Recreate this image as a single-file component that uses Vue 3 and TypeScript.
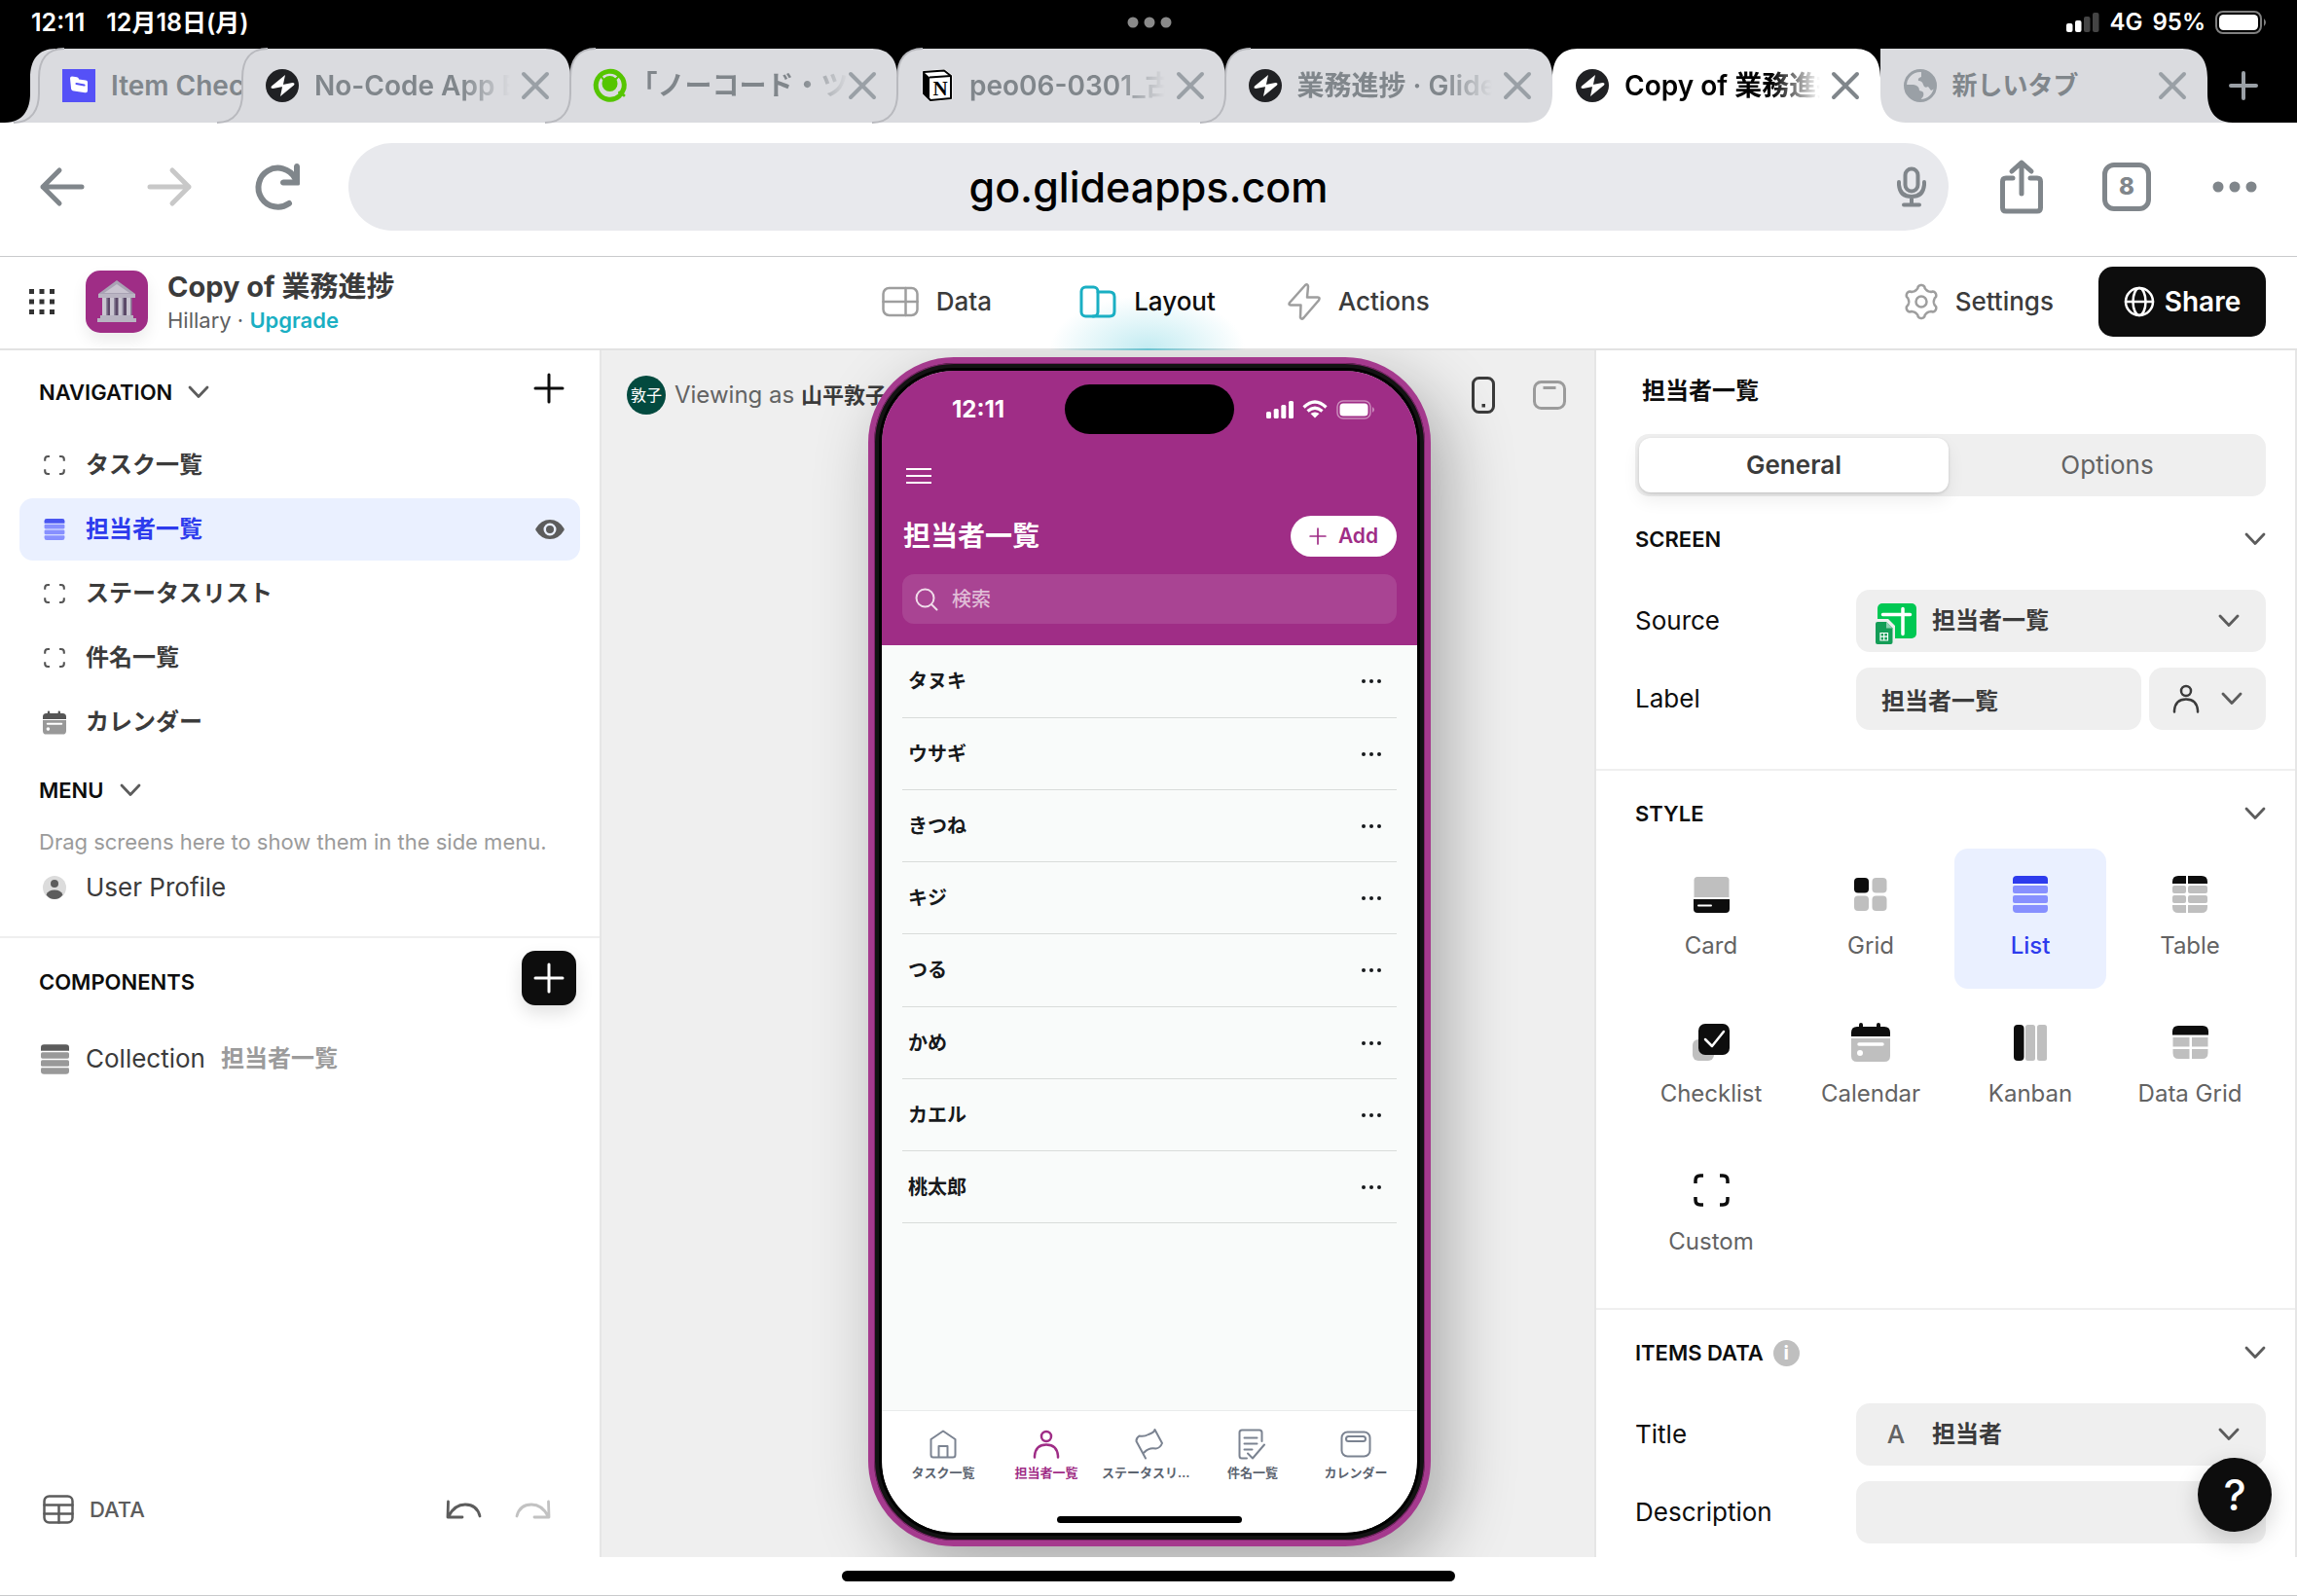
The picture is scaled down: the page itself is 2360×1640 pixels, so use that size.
<script setup lang="ts">
import { h, ref, type FunctionalComponent } from 'vue'

interface Glyph { w: number; h: number; body: string }

/* Outline of the settings cog: a circle whose radius swells six times. */
function cogPath(cx: number, cy: number): string {
  const points: string[] = []
  for (let i = 0; i < 120; i++) {
    const a = (i / 120) * Math.PI * 2
    const swell = Math.cos(6 * a)
    const r = 14.2 + (swell > 0 ? 2.8 * Math.sqrt(swell) : 1.4 * swell)
    points.push(`${(cx + r * Math.sin(a)).toFixed(2)} ${(cy - r * Math.cos(a)).toFixed(2)}`)
  }
  return `M${points.join('L')}Z`
}

const line = 'fill="none" stroke="currentColor" stroke-linecap="round" stroke-linejoin="round"'

const glyphs: Record<string, Glyph> = {
  glide: { w: 34, h: 34, body: '<circle cx="17" cy="17" r="17" fill="#202124"/><path fill="#fff" d="M20 6 6 17.500q-1.500 2.500 1.500 2.500l10-2zM15 28l14-11.500q1.500-2.500-1.500-2.500l-10 2z"/>' },
  itemcheck: { w: 34, h: 34, body: '<path fill="#5551f7" d="M0 0h34v34H0z"/><path fill="#fff" d="M8 9.500q0-2 2-2l5 .8q2 .2 2 2.200l7 1q2 .2 2 2V22q0 2.500-2.500 2.200L12 22.500q-3-.4-3-3z"/><path stroke="#5551f7" stroke-width="2.200" stroke-linecap="round" d="m14.500 15 8 1.500"/>' },
  qiita: { w: 34, h: 34, body: '<path fill="none" stroke="#55c500" stroke-width="5" stroke-linecap="round" d="M26.500 27.500A14.500 14.500 0 1 1 31 19.500l-1.500 3.500"/><circle cx="16.500" cy="15" r="8" fill="#55c500"/><path stroke="#55c500" stroke-width="2" d="m10 11-3-5M22 11l4-4"/><path d="m26.500 24 4.500 3" stroke="#55c500" stroke-width="3" stroke-linecap="round"/>' },
  notion: { w: 34, h: 34, body: '<path fill="#fff" stroke="#fff" stroke-width="3" stroke-linejoin="round" d="m3 3 21-1.500L31 7v23l-21 2-7-7z"/><path fill="#fff" stroke="#000" stroke-width="2" stroke-linejoin="round" d="m3 3 21-1.500L31 7v23l-21 2-7-7z"/><path fill="#000" d="m3 3 6 5.500V31l-6-6z"/><path stroke="#000" stroke-width="2" d="M9 8.500 31 7"/><text x="20" y="27" text-anchor="middle" font-family="Liberation Serif, serif" font-weight="700" font-size="21" fill="#000">N</text>' },
  world: { w: 34, h: 34, body: '<circle cx="17" cy="17" r="15.500" fill="#dadbdf" stroke="#9aa0a6" stroke-width="3"/><path fill="#9aa0a6" d="M2 16h8q6 1 6 6l3 1q2 1 1 5l-4 5C7 32 2 26 2 16zM18 2v6q-4 1-3 4 4 0 5 4 1 4 5 2l3 4 4-2q2-14-14-18z"/>' },
  close: { w: 30, h: 30, body: `<path ${line} stroke-width="4" d="m3 3 24 24M27 3 3 27"/>` },
  plusTab: { w: 32, h: 32, body: `<path ${line} stroke-width="4" d="M16 3v26M3 16h26"/>` },
  back: { w: 48, h: 42, body: `<path ${line} stroke-width="5" d="M44 21H4M21 4 4 21l17 17"/>` },
  forward: { w: 48, h: 42, body: `<path ${line} stroke-width="5" d="M4 21h40M27 4l17 17-17 17"/>` },
  reload: { w: 50, h: 50, body: `<path ${line} stroke-width="6" d="M37 42A20 20 0 1 1 43 16"/><path fill="currentColor" d="M48 4v18q0 1.500-1.500 1.500H31q-3-.5-3-3t3-3h11V4q.5-3 3-3t3 3z"/>` },
  mic: { w: 32, h: 42, body: `<rect x="9.500" y="2.500" width="13" height="23" rx="6.500" ${line} stroke-width="4"/><path ${line} stroke-width="4" d="M3 16v3q1 12 13 12t13-12v-3M16 32v7M8 39.500h16"/>` },
  share: { w: 46, h: 56, body: `<path ${line} stroke-width="5" d="M14 19H7q-3.500 0-3.500 3.500v27Q3.500 53 7 53h32q3.500 0 3.500-3.500v-27Q42.500 19 39 19h-7M23 35V4M13 12l10-9 10 9"/>` },
  dots: { w: 46, h: 12, body: '<g fill="currentColor"><circle cx="6" cy="6" r="5.500"/><circle cx="23" cy="6" r="5.500"/><circle cx="40" cy="6" r="5.500"/></g>' },
  apps: { w: 26, h: 26, body: '<path fill="currentColor" d="M0 0h5v5H0zM10.500 0h5v5h-5zM21 0h5v5h-5zM0 10.500h5v5H0zM10.500 10.500h5v5h-5zM21 10.500h5v5h-5zM0 21h5v5H0zM10.500 21h5v5h-5zM21 21h5v5h-5z"/>' },
  museum: { w: 40, h: 44, body: '<path fill="#a9a3b4" d="M20 0 39 14H1z"/><path fill="#c9c4d0" d="M20 4 33 13H7z"/><path fill="#b9b4c2" d="M1 14h38v4H1zM3 36h34v3H3zM0 39h40v4H0z"/><path fill="#5b4968" d="M5 18h30v18H5z"/><path fill="#c9c5d0" d="M5 18h5v18H5zM13 18h5v18h-5zM21.500 18h5v18h-5zM30 18h5v18h-5z"/><path fill="#8e869b" d="M9 18h1.500v18H9zM17 18h1.500v18H17zM25.500 18H27v18h-1.500zM34 18h1.500v18H34z"/>' },
  data: { w: 38, h: 32, body: `<rect x="1.500" y="2" width="35" height="28" rx="6" ${line} stroke-width="2.500"/><path ${line} stroke-width="2.500" d="M1.500 16h35M24.500 2v28"/>` },
  layout: { w: 38, h: 34, body: `<rect x="2" y="2" width="17" height="30" rx="4.500" ${line} stroke-width="3"/><path ${line} stroke-width="3" d="M19 7h12q5 0 5 5v15q0 5-5 5H14"/>` },
  bolt: { w: 34, h: 40, body: `<path ${line} stroke-width="2.500" d="M18.500 2.500 2 21q-1.500 2.500 1 2.500h10.500L13 36q1 3 3.500.5L32 18.500q1.500-3-1-3H20l1-11q-.5-3-2.500-2z"/>` },
  cog: { w: 38, h: 38, body: `<path ${line} stroke-width="2.500" d="${cogPath(19, 19)}"/><circle cx="19" cy="19" r="5.500" ${line} stroke-width="2.500"/>` },
  globe: { w: 32, h: 32, body: `<circle cx="16" cy="16" r="14" ${line} stroke-width="2.500"/><ellipse cx="16" cy="16" rx="6.500" ry="14" ${line} stroke-width="2.500"/><path ${line} stroke-width="2.500" d="M2 16h28"/>` },
  chevron: { w: 22, h: 14, body: `<path ${line} stroke-width="2.800" d="m2 2 9 9.500L20 2"/>` },
  plus: { w: 32, h: 32, body: `<path ${line} stroke-width="3" d="M16 2v28M2 16h28"/>` },
  custom: { w: 37, h: 34, body: `<path fill="none" stroke="currentColor" stroke-width="3.500" d="M2 10V7q0-5 5-5h3M27 2h3q5 0 5 5v3M35 24v3q0 5-5 5h-3M10 32H7q-5 0-5-5v-3"/>` },
  list: { w: 36, h: 38, body: '<path fill="currentColor" d="M4 0h28q4 0 4 4v4H0V4q0-4 4-4z"/><g fill="var(--soft)"><rect y="10" width="36" height="8" rx="2"/><rect y="20" width="36" height="8" rx="2"/><path d="M1 30h34q1 0 1 2v2q0 4-4 4H4q-4 0-4-4v-2q0-2 1-2z"/></g>' },
  calendar: { w: 40, h: 40, body: '<path fill="currentColor" d="M6 4h2V2q0-2 2-2t2 2v2h14V2q0-2 2-2t2 2v2h4q6 0 6 6v4H0v-4q0-6 6-6z"/><path fill="var(--soft)" d="M0 16h40v18q0 6-6 6H6q-6 0-6-6z"/><path stroke="#fff" stroke-width="3.500" stroke-linecap="round" d="M8 22h24"/><circle cx="9" cy="31" r="3" fill="#fff"/>' },
  card: { w: 37, h: 37, body: '<path fill="var(--soft)" d="M4 0h29q3.500 0 3.500 3.500V21H.5V3.500Q.5 0 4 0z"/><path fill="currentColor" d="M0 23h37v10q0 4-4 4H4q-4 0-4-4z"/><path stroke="#fff" stroke-width="2" stroke-linecap="round" d="M5 29.500h13"/>' },
  grid: { w: 34, h: 34, body: '<rect width="15" height="15.500" rx="4" fill="currentColor"/><g fill="var(--soft)"><rect x="18.500" width="15" height="15.500" rx="4"/><rect y="18.500" width="15" height="15.500" rx="4"/><rect x="18.500" y="18.500" width="15" height="15.500" rx="4"/></g>' },
  table: { w: 36, h: 38, body: '<path fill="currentColor" d="M6 0h8v8H0V6q0-6 6-6zM16 0h14q6 0 6 6v2H16z"/><g fill="var(--soft)"><rect y="10" width="14" height="8" rx="2"/><rect x="16" y="10" width="20" height="8" rx="2"/><rect y="20" width="14" height="8" rx="2"/><rect x="16" y="20" width="20" height="8" rx="2"/><path d="M0 30h14v8H6q-6 0-6-6zM16 30h20v2q0 6-6 6H16z"/></g>' },
  checklist: { w: 38, h: 38, body: '<rect y="16" width="22" height="22" rx="6" fill="var(--soft)"/><rect x="6" width="32" height="32" rx="7" fill="currentColor"/><path fill="none" stroke="#fff" stroke-width="2.500" stroke-linecap="round" stroke-linejoin="round" d="m13 16 7 7L32 8"/>' },
  kanban: { w: 34, h: 37, body: '<rect width="10.500" height="37" rx="4" fill="currentColor"/><g fill="var(--soft)"><rect x="12" width="10" height="37" rx="2.500"/><rect x="24" width="10" height="37" rx="2.500"/></g>' },
  datagrid: { w: 37, h: 34, body: '<path fill="currentColor" d="M6 0h25q6 0 6 6v3.500H0V6q0-6 6-6z"/><path fill="var(--soft)" d="M.5 12h17v9.500H.5zM20 12h16.500v9.500H20zM.5 24h17v10H6.500q-6 0-6-6zM20 24h16.500v4q0 6-6 6H20z"/>' },
  eye: { w: 30, h: 20, body: '<path fill="currentColor" fill-rule="evenodd" d="M15 0q9 0 14.500 9 .5 1 0 2Q24 20 15 20T.5 11q-.5-1 0-2Q6 0 15 0zm0 3.500a6.500 6.500 0 1 0 0 13 6.500 6.500 0 0 0 0-13z"/><circle cx="15" cy="10" r="4" fill="currentColor"/>' },
  profile: { w: 24, h: 24, body: '<circle cx="12" cy="12" r="12" fill="#dcdcdc"/><circle cx="12" cy="8" r="4" fill="#5c5c5c"/><path fill="#5c5c5c" d="M3.500 19.500q2-5 8.500-5t8.500 5Q17 24 12 24t-8.500-4.500z"/>' },
  sheet: { w: 32, h: 30, body: `<rect x="1.500" y="1.500" width="29" height="27" rx="5" ${line} stroke-width="2.500"/><path ${line} stroke-width="2.500" d="M1.500 10.500h29M1.500 19.500h29M16.500 10.500v18"/>` },
  undo: { w: 37, h: 20, body: `<path ${line} stroke-width="2.800" d="M2.500 2 2 18h15M3 17Q9 5 20 5q12 0 15 12"/>` },
  redo: { w: 37, h: 20, body: `<path ${line} stroke-width="2.800" d="M34.500 2l.5 16H20M34 17Q28 5 17 5 5 5 2 17"/>` },
  phone: { w: 24, h: 38, body: `<rect x="1.500" y="1.500" width="21" height="35" rx="6" ${line} stroke-width="3"/><path fill="currentColor" d="M10.500 28h3.500v3.500h-3.500z"/>` },
  tablet: { w: 34, h: 30, body: `<rect x="1.500" y="1.500" width="31" height="27" rx="7" ${line} stroke-width="3"/><path stroke="currentColor" stroke-width="3" d="M10.500 7.500h13"/>` },
  bars: { w: 28, h: 18, body: '<g fill="currentColor"><rect y="11" width="5" height="7" rx="1.500"/><rect x="7.700" y="8" width="5" height="10" rx="1.500"/><rect x="15.300" y="4" width="5" height="14" rx="1.500"/><rect x="23" width="5" height="18" rx="1.500"/></g>' },
  wifi: { w: 26, h: 19, body: '<g fill="none" stroke="currentColor" stroke-width="3.200"><path d="M1.500 7.500q11.500-11 23 0M5.500 11.500q7.500-6.500 15 0"/></g><path fill="currentColor" d="M8.500 14q4.500-3 9 0L13 18.500z"/>' },
  battery: { w: 40, h: 20, body: '<rect x="1" y="1" width="34" height="18" rx="6" fill="none" stroke="currentColor" stroke-opacity=".45" stroke-width="1.500"/><rect x="3.500" y="3.500" width="29" height="13" rx="3.500" fill="currentColor"/><path fill="currentColor" fill-opacity=".45" d="M37 7q4 3 0 6z"/>' },
  batteryPad: { w: 54, h: 24, body: '<rect x="1" y="1" width="46" height="22" rx="7" fill="none" stroke="#808080" stroke-width="2"/><rect x="4" y="4" width="40" height="16" rx="4.500" fill="#fff"/><path fill="#808080" d="M50 8q4 4 0 8z"/>' },
  signalPad: { w: 34, h: 20, body: '<rect y="11" width="6.500" height="9" rx="2" fill="#fff"/><rect x="9" y="8" width="6.500" height="12" rx="2" fill="#fff"/><rect x="18" y="4" width="6.500" height="16" rx="2" fill="#444"/><rect x="27" width="6.500" height="20" rx="2" fill="#444"/>' },
  menu: { w: 26, h: 18, body: '<path stroke="currentColor" stroke-width="2" d="M0 2h26M0 9h26M0 16h26"/>' },
  search: { w: 24, h: 24, body: `<circle cx="10.500" cy="10.500" r="9" ${line} stroke-width="2"/><path ${line} stroke-width="2" d="m17 17 5.500 5.500"/>` },
  more: { w: 22, h: 6, body: '<g fill="currentColor"><circle cx="3" cy="3" r="2"/><circle cx="11" cy="3" r="2"/><circle cx="19" cy="3" r="2"/></g>' },
  home: { w: 28, h: 30, body: `<path ${line} stroke-width="2" d="M14 1.500 26.500 10v16q0 2.500-2.500 2.500H4Q1.500 28.500 1.500 26V10zM9.500 28V17h9v11"/>` },
  person: { w: 28, h: 30, body: `<circle cx="14" cy="7" r="5" ${line} stroke-width="2.500"/><path ${line} stroke-width="2.500" d="M2 28.500V27q1-11.500 12-11.500T26 27v1.500"/>` },
  flag: { w: 30, h: 32, body: `<path ${line} stroke-width="2" d="M11 30.500 1.500 13q-.5-3 3-5.500 5 1 9.500-1.500 6-2 6.500-5l7.500 14q-2 5-6.500 5.500-7-1.500-12 4"/>` },
  checkdoc: { w: 30, h: 32, body: `<path ${line} stroke-width="2" d="M9 30.500H4Q1.500 30.500 1.500 28V4Q1.500 1.500 4 1.500h18q2.500 0 2.500 2.500v9M6.500 9.500h13M6.500 15.500h13M6.500 21.500h8M10 25.500l5 5 12-14"/>` },
  schedule: { w: 32, h: 28, body: `<rect x="1.500" y="1.500" width="29" height="25" rx="6" ${line} stroke-width="2"/><rect x="6" y="6" width="20" height="5" rx="2.500" ${line} stroke-width="2"/>` },
  source: { w: 42, h: 42, body: '<rect x="2" width="40" height="36" rx="5" fill="#00c853"/><path stroke="#fff" stroke-width="3.500" stroke-linecap="round" d="M7.500 11.500h28M28 5.500v26"/><path fill="#efefef" d="M0 16h13l7 7v19H0z"/><path fill="#149d57" d="M2 19h9l6.500 6.500V40q0 2-2 2H2q-2 0-2-2V21q0-2 2-2z"/><path fill="#8ed1b1" d="M11 19v6.500h6.500z"/><path fill="none" stroke="#fff" stroke-width="1.200" d="M5 30.500h7.500v7.500H5zM5 34.200h7.500M8.700 30.500v7.500"/>' },
}

const Ic: FunctionalComponent<{ n: string }> = (props) => {
  const g = glyphs[props.n]
  return h('svg', {
    width: g.w,
    height: g.h,
    viewBox: `0 0 ${g.w} ${g.h}`,
    'aria-hidden': 'true',
    innerHTML: g.body,
  })
}
Ic.props = ['n']

const tabs = [
  { icon: 'glide', title: 'No-Code App B', kind: 'idle' },
  { icon: 'qiita', title: '「ノーコード・ツー', kind: 'idle flush' },
  { icon: 'notion', title: 'peo06-0301_古', kind: 'idle' },
  { icon: 'glide', title: '業務進捗 · Glide', kind: 'idle' },
  { icon: 'glide', title: 'Copy of 業務進捗', kind: 'active' },
  { icon: 'world', title: '新しいタブ', kind: 'idle last' },
]

const screens = [
  { icon: 'custom', label: 'タスク一覧' },
  { icon: 'list', label: '担当者一覧' },
  { icon: 'custom', label: 'ステータスリスト' },
  { icon: 'custom', label: '件名一覧' },
  { icon: 'calendar', label: 'カレンダー' },
]
const current = ref('担当者一覧')

const people = ['タヌキ', 'ウサギ', 'きつね', 'キジ', 'つる', 'かめ', 'カエル', '桃太郎']

const phoneTabs = [
  { icon: 'home', label: 'タスク一覧' },
  { icon: 'person', label: '担当者一覧' },
  { icon: 'flag', label: 'ステータスリスト' },
  { icon: 'checkdoc', label: '件名一覧' },
  { icon: 'schedule', label: 'カレンダー' },
]

const styles = [
  { icon: 'card', label: 'Card' },
  { icon: 'grid', label: 'Grid' },
  { icon: 'list', label: 'List' },
  { icon: 'table', label: 'Table' },
  { icon: 'checklist', label: 'Checklist' },
  { icon: 'calendar', label: 'Calendar' },
  { icon: 'kanban', label: 'Kanban' },
  { icon: 'datagrid', label: 'Data Grid' },
  { icon: 'custom', label: 'Custom' },
]
const style = ref('List')
const pane = ref('General')
const label = ref('担当者一覧')
</script>

<template>
  <div class="page">
    <div class="status">
      <div class="status-side"><span>12:11</span><span>12月18日(月)</span></div>
      <Ic n="dots" class="multitask" />
      <div class="status-side end"><Ic n="signalPad" /><span>4G</span><span>95%</span><Ic n="batteryPad" /></div>
    </div>

    <div class="strip">
      <div class="tab stub idle">
        <svg class="edge" width="52" height="76" viewBox="0 0 52 76" aria-hidden="true"><path class="fill" d="M0 76C19 76 26 62 26 46V30C26 12 34 0 52 0V76Z" /></svg>
      </div>
      <div class="tab short idle">
        <svg class="edge" width="52" height="76" viewBox="0 0 52 76" aria-hidden="true"><path class="fill" d="M0 76C19 76 26 62 26 46V30C26 12 34 0 52 0V76Z" /><path class="rim" d="M0 76C19 76 26 62 26 46V30C26 12 34 0 52 0" /></svg>
        <Ic n="itemcheck" /><span class="tab-title">Item Check</span>
      </div>
      <div v-for="t in tabs" :key="t.title" class="tab" :class="t.kind">
        <svg class="edge" width="52" height="76" viewBox="0 0 52 76" aria-hidden="true"><path class="fill" d="M0 76C19 76 26 62 26 46V30C26 12 34 0 52 0V76Z" /><path class="rim" d="M0 76C19 76 26 62 26 46V30C26 12 34 0 52 0" /></svg>
        <svg class="edge tail" width="52" height="76" viewBox="0 0 52 76" aria-hidden="true"><path class="fill" d="M52 76C33 76 26 62 26 46V30C26 12 18 0 0 0V76Z" /></svg>
        <Ic :n="t.icon" />
        <span class="tab-title">{{ t.title }}</span>
        <button class="bare" aria-label="Close tab"><Ic n="close" /></button>
      </div>
      <button class="bare new-tab" aria-label="New tab"><Ic n="plusTab" /></button>
    </div>

    <div class="toolbar">
      <button class="bare" aria-label="Back"><Ic n="back" /></button>
      <button class="bare faded" aria-label="Forward"><Ic n="forward" /></button>
      <button class="bare" aria-label="Reload"><Ic n="reload" /></button>
      <div class="omnibox">
        <input class="url" type="text" value="go.glideapps.com" aria-label="Address" />
        <button class="bare mic" aria-label="Voice search"><Ic n="mic" /></button>
      </div>
      <button class="bare" aria-label="Share page"><Ic n="share" /></button>
      <button class="bare count">8</button>
      <button class="bare" aria-label="More"><Ic n="dots" /></button>
    </div>

    <header class="header">
      <div class="brand">
        <button class="bare apps" aria-label="All apps"><Ic n="apps" /></button>
        <div class="app-icon"><Ic n="museum" /></div>
        <div class="brand-text">
          <h1>Copy of 業務進捗</h1>
          <p>Hillary · <a href="#upgrade">Upgrade</a></p>
        </div>
      </div>
      <nav class="modes">
        <a href="#data" class="mode"><Ic n="data" />Data</a>
        <a href="#layout" class="mode on"><Ic n="layout" />Layout</a>
        <a href="#actions" class="mode"><Ic n="bolt" />Actions</a>
      </nav>
      <div class="header-end">
        <a href="#settings" class="mode"><Ic n="cog" />Settings</a>
        <button class="share"><Ic n="globe" />Share</button>
      </div>
    </header>

    <main class="main">
      <aside class="left">
        <section class="nav-block">
          <div class="caption-row">
            <h2>NAVIGATION</h2><Ic n="chevron" class="chev" />
            <button class="bare add" aria-label="Add screen"><Ic n="plus" /></button>
          </div>
          <div class="screens">
            <button v-for="s in screens" :key="s.label" class="screen" :class="{ on: s.label === current }" @click="current = s.label">
              <span class="slot"><Ic :n="s.icon" :class="['mini', s.icon]" /></span>{{ s.label }}
              <Ic v-if="s.label === current" n="eye" class="eye" />
            </button>
          </div>
          <div class="caption-row menu"><h2>MENU</h2><Ic n="chevron" class="chev" /></div>
          <p class="hint">Drag screens here to show them in the side menu.</p>
          <button class="screen latin"><span class="slot"><Ic n="profile" /></span>User Profile</button>
        </section>
        <section class="components">
          <div class="caption-row comp">
            <h2>COMPONENTS</h2>
            <button class="add-dark" aria-label="Add component"><Ic n="plus" /></button>
          </div>
          <button class="screen latin collection"><span class="slot"><Ic n="list" class="stack" /></span>Collection<span class="muted">担当者一覧</span></button>
        </section>
        <footer class="left-foot">
          <button class="bare data-link"><Ic n="sheet" />DATA</button>
          <button class="bare undo" aria-label="Undo"><Ic n="undo" /></button>
          <button class="bare redo" aria-label="Redo"><Ic n="redo" /></button>
        </footer>
      </aside>

      <section class="stage">
        <div class="viewer"><span class="avatar">敦子</span><span>Viewing as <b>山平敦子</b></span></div>
        <div class="phone">
          <div class="display">
            <div class="ph-head">
              <div class="ph-status">
                <span class="clock">12:11</span>
                <span class="island"></span>
                <span class="radios"><Ic n="bars" /><Ic n="wifi" /><Ic n="battery" /></span>
              </div>
              <button class="bare burger" aria-label="Menu"><Ic n="menu" /></button>
              <div class="ph-title">
                <h2>担当者一覧</h2>
                <button class="ph-add"><Ic n="plus" class="tiny" />Add</button>
              </div>
              <label class="ph-search"><Ic n="search" /><input type="search" placeholder="検索" aria-label="検索" /></label>
            </div>
            <ul class="people">
              <li v-for="p in people" :key="p">{{ p }}<button class="bare" :aria-label="p + ' menu'"><Ic n="more" /></button></li>
            </ul>
            <nav class="ph-tabs">
              <a v-for="t in phoneTabs" :key="t.label" href="#tab" :class="{ on: t.label === current }">
                <span class="ph-ico"><Ic :n="t.icon" /></span><span class="ph-label">{{ t.label }}</span>
              </a>
            </nav>
            <div class="ph-home"><span></span></div>
          </div>
        </div>
        <div class="devices">
          <button class="bare dev-on" aria-label="Phone preview"><Ic n="phone" /></button>
          <button class="bare dev-off" aria-label="Tablet preview"><Ic n="tablet" /></button>
        </div>
      </section>

      <aside class="inspector">
        <section class="group first">
          <h2 class="panel-title">担当者一覧</h2>
          <div class="segments">
            <button v-for="p in ['General', 'Options']" :key="p" :class="{ on: p === pane }" @click="pane = p">{{ p }}</button>
          </div>
          <div class="group-head"><h3>SCREEN</h3><Ic n="chevron" class="chev" /></div>
          <div class="row">
            <label for="source">Source</label>
            <div class="field">
              <Ic n="source" class="src" />
              <select id="source"><option>担当者一覧</option></select>
              <Ic n="chevron" class="chev" />
            </div>
          </div>
          <div class="row">
            <label for="label">Label</label>
            <input id="label" v-model="label" class="field plain" type="text" />
            <button class="field icon-pick" aria-label="Icon"><Ic n="person" /><Ic n="chevron" class="chev" /></button>
          </div>
        </section>
        <section class="group tiles-group">
          <div class="group-head"><h3>STYLE</h3><Ic n="chevron" class="chev" /></div>
          <div class="tiles">
            <button v-for="s in styles" :key="s.label" class="tile" :class="{ on: s.label === style }" @click="style = s.label">
              <span class="tile-ico"><Ic :n="s.icon" /></span>{{ s.label }}
            </button>
          </div>
        </section>
        <section class="group items">
          <div class="group-head"><h3>ITEMS DATA</h3><span class="info">i</span><Ic n="chevron" class="chev" /></div>
          <div class="row">
            <label for="title">Title</label>
            <div class="field">
              <span class="type">A</span>
              <select id="title"><option>担当者</option></select>
              <Ic n="chevron" class="chev" />
            </div>
          </div>
          <div class="row">
            <label for="description">Description</label>
            <div class="field"><select id="description"><option></option></select></div>
          </div>
        </section>
        <button class="help" aria-label="Help">?</button>
      </aside>
    </main>

    <div class="dock"><span></span></div>
  </div>
</template>

<style>
body { background: #fff; }
</style>

<style scoped>
.page, .page * { box-sizing: border-box; }
.page {
  --ink: #0d0d0d;
  --text: #3b3b3b;
  --brand: #9f2d86;
  --soft: #bfbfbf;
  min-height: 100vh;
  display: flex;
  flex-direction: column;
  background: #fff;
  color: var(--text);
  font: 400 24px/32px Inter, "Noto Sans CJK JP", sans-serif;
}
svg { display: block; flex: none; overflow: visible; }
h1, h2, h3, p, ul { margin: 0; padding: 0; }
a { color: inherit; text-decoration: none; }
button, input, select { font: inherit; color: inherit; padding: 0; margin: 0; border: 0; background: none; }
button { display: flex; align-items: center; cursor: pointer; white-space: nowrap; }
select { appearance: none; flex: 1; min-width: 0; height: 100%; }
input, select, button { outline: none; }

/* device status bar */
.status { display: grid; grid-template-columns: 1fr auto 1fr; align-items: center; height: 50px; padding: 0 30px 4px 32px; background: #000; color: #fff; font-size: 25px; font-weight: 600; }
.status-side { display: flex; align-items: center; gap: 22px; }
.end { justify-content: flex-end; gap: 10px; font-size: 24px; }
.multitask { color: #8a8a8a; }

/* browser tabs */
.strip { display: flex; height: 76px; padding-left: 31px; background: #000; }
.tab { position: relative; flex: 1; min-width: 0; display: flex; align-items: center; gap: 16px; padding: 0 21px 0 24px; color: #80868b; font-size: 28px; font-weight: 600; }
.tab > *:not(.edge) { position: relative; z-index: 1; }
.idle { --paper: #dadbdf; z-index: 1; }
.active { --paper: #fff; z-index: 2; color: #000; }
.tab::before { content: ""; position: absolute; inset: 0 25px; background: var(--paper); }
.stub { flex: none; width: 9px; padding: 0; }
.stub::before { display: none; }
.short { flex: none; width: 209px; padding-right: 0; }
.short::before { right: -26px; }
.tab > .edge { position: absolute; left: -26px; top: 0; }
.tab > .tail { left: auto; right: -26px; }
.fill { fill: var(--paper); }
.rim { fill: none; stroke: #b8b9be; stroke-width: 2; }
.active .rim, .last .rim { stroke: none; }
.idle:not(.last) .tail .fill { d: path("M26 76V30C26 12 18 0 0 0V76Z"); }
.tab-title { flex: 1; min-width: 0; overflow: hidden; white-space: nowrap; mask-image: linear-gradient(90deg, #000 calc(100% - 50px), transparent); }
.short .tab-title { mask-image: none; }
.tab.flush { gap: 4px; }
.tab .bare { color: #9aa0a6; }
.tab:not(.short) .tab-title { margin-right: -5px; }
.tab.active .bare { color: #80868b; }
.last .tab-title { mask-image: none; font-size: 26px; }
.tab.last::before { left: 0; }
.last .edge:not(.tail) { display: none; }
.tab.last { border-radius: 26px 0 0 26px; }
.new-tab { width: 92px; padding-left: 21px; color: #9aa0a6; }

/* browser toolbar */
.toolbar { display: flex; align-items: center; height: 138px; padding: 0 41px 6px 40px; border-bottom: 1px solid #c9cacc; color: #80868b; }
.faded { margin: 0 62px; color: #c8c8c8; }
.omnibox { position: relative; flex: 1; height: 90px; margin: 0 52px 0 48px; border-radius: 45px; background: #e8e9ed; }
.url { width: 100%; height: 90px; text-align: center; color: #000; font-size: 43px; font-weight: 500; }
.mic { position: absolute; right: 22px; top: 24px; }
.count { justify-content: center; width: 50px; height: 50px; margin: 0 63px 0 60px; border: 5px solid #80868b; border-radius: 12px; font-size: 24px; font-weight: 800; }

/* builder header */
.header { display: grid; grid-template-columns: 1fr 650px 1fr; align-items: stretch; height: 96px; padding: 0 32px 0 30px; border-bottom: 2px solid #e2e2e2; }
.brand { display: flex; align-items: center; padding-bottom: 3px; }
.apps { color: #333; }
.app-icon { display: flex; align-items: center; justify-content: center; width: 64px; height: 64px; margin: 0 20px 0 32px; border-radius: 15px; background: var(--brand); box-shadow: 0 8px 16px rgba(0, 0, 0, .08); }
.brand-text { display: flex; flex-direction: column; gap: 2px; }
h1 { font-size: 29px; line-height: 36px; font-weight: 700; }
.brand-text p { font-size: 22px; line-height: 28px; color: #5f5f5f; }
.brand-text a { color: #1aafc3; font-weight: 600; }
.modes { display: grid; grid-template-columns: repeat(3, 1fr); }
.mode { display: flex; align-items: center; justify-content: center; gap: 18px; padding-bottom: 2px; font-size: 26px; font-weight: 500; }
.mode svg { color: #9e9e9e; }
.mode.on {
  margin-bottom: -2px;
  padding-bottom: 4px;
  color: var(--ink);
  background:
    linear-gradient(90deg, rgba(70, 182, 200, 0), #6cc3d0 50%, rgba(70, 182, 200, 0)) bottom / 200px 2px no-repeat,
    radial-gradient(100px 54px at 50% 100%, #c4ecf2, rgba(255, 255, 255, 0)) 0 -2px no-repeat;
}
.mode.on svg { color: #1aafc3; }
.header-end { display: flex; align-items: center; justify-content: flex-end; gap: 46px; }
.header-end .mode { gap: 16px; }
.share { justify-content: center; gap: 10px; width: 172px; height: 72px; margin-bottom: 2px; border-radius: 15px; background: var(--ink); color: #fff; font-size: 28px; font-weight: 600; }

.main { flex: 1; display: flex; min-height: 0; }
h2, h3 { font-size: 22px; line-height: 32px; font-weight: 600; color: var(--ink); }
.chev { color: #5c5c5c; }

/* screens and components */
.left { flex: none; width: 618px; display: flex; flex-direction: column; border-right: 2px solid #e6e6e6; }
.nav-block { padding: 19px 20px 18px; border-bottom: 2px solid #efefef; }
.caption-row { display: flex; align-items: center; gap: 16px; height: 48px; padding-left: 20px; }
.add { margin: 0 16px 8px auto; color: var(--ink); }
.screens { display: flex; flex-direction: column; gap: 2px; padding-top: 19px; }
.screen { width: 100%; height: 64px; padding: 0 16px 0 18px; border-radius: 14px; text-align: left; font-weight: 600; }
.slot { display: flex; justify-content: center; width: 36px; margin-right: 14px; }
.mini { width: 22px; height: 22px; color: #555; --soft: #999; }
.mini.calendar { width: 24px; height: 27px; }
.screen.on { background: #eaf0ff; color: #2d3bed; }
.screen.on .mini { color: #4a56f0; --soft: #8790ff; }
.eye { margin-left: auto; color: #5c5c5c; }
.menu { padding-top: 0; margin-top: 14px; }
.hint { padding-left: 20px; margin-top: 14px; font-size: 22px; line-height: 30px; color: #9b9b9b; }
.screen.latin { font-size: 26px; font-weight: 400; }
.components { padding: 13px 20px 0; }
.comp { justify-content: space-between; height: 56px; padding-right: 4px; }
.comp h2 { padding-top: 8px; }
.add-dark { justify-content: center; width: 56px; height: 56px; border-radius: 14px; background: var(--ink); color: #fff; box-shadow: 0 8px 18px rgba(0, 0, 0, .12); }
.collection { margin-top: 23px; }
.stack { width: 29px; height: 31px; color: #5c5c5c; --soft: #999; }
.muted { margin-left: 16px; color: #9b9b9b; font-size: 24px; font-weight: 600; }
.left-foot { display: flex; align-items: center; margin-top: auto; height: 98px; padding: 0 50px 0 44px; color: #5c5c5c; }
.data-link { gap: 16px; margin-right: auto; font-size: 22px; font-weight: 500; }
.redo { margin-left: 34px; color: #c2c2c2; }

/* preview */
.stage { flex: 1; min-width: 0; display: grid; grid-template-columns: 274fr 578px 168fr; align-items: stretch; padding: 7px 0 11px; overflow: hidden; background: #efefef; }
.viewer { display: flex; align-items: center; align-self: start; gap: 9px; height: 40px; margin: 19px 0 0 26px; white-space: nowrap; font-size: 24px; color: #636363; min-width: 0; }
.viewer b { font-weight: 600; font-size: 22px; color: #3b3b3b; }
.avatar { flex: none; width: 40px; height: 40px; border-radius: 50%; background: #034a3f; color: #fff; font-size: 16px; line-height: 40px; text-align: center; }
.phone { position: relative; z-index: 1; display: flex; padding: 8px; border: 6px solid #a53a8e; border-radius: 88px; background: #131313; box-shadow: inset 0 0 0 1px #7d2369, 16px 24px 70px rgba(0, 0, 0, .3); }
.display { flex: 1; min-width: 0; display: flex; flex-direction: column; overflow: hidden; border-radius: 74px; background: #f9fbfa; outline: 3px solid #000; }
.ph-head { display: flex; flex-direction: column; height: 282px; padding: 14px 21px 0; background: var(--brand); color: #fff; }
.ph-status { display: grid; grid-template-columns: 1fr 174px 1fr; align-items: center; height: 51px; }
.clock { padding-left: 51px; font-size: 24px; font-weight: 700; }
.island { height: 51px; border-radius: 26px; background: #000; }
.radios { display: flex; align-items: center; gap: 9px; padding-left: 33px; }
.burger { height: 20px; margin: 33px 0 0 4px; }
.ph-title { display: flex; align-items: center; justify-content: space-between; height: 42px; margin-top: 31px; }
.ph-title h2 { padding-left: 1px; font-size: 28px; font-weight: 700; color: #fff; }
.ph-add { justify-content: center; gap: 12px; width: 109px; height: 42px; border-radius: 21px; background: #fff; color: var(--brand); font-size: 21px; font-weight: 600; }
.tiny { width: 18px; height: 18px; }
.ph-search { display: flex; align-items: center; gap: 14px; height: 51px; margin-top: 18px; padding: 0 14px 0 13px; border-radius: 12px; background: rgba(255, 255, 255, .11); color: #f0dcea; font-size: 20px; }
.ph-search input { flex: 1; min-width: 0; font-weight: 500; }
.ph-search input::placeholder { color: #e0bdd7; opacity: 1; }
.people { flex: 1; padding: 0 21px; list-style: none; }
.people li { display: flex; align-items: center; justify-content: space-between; height: 74px; padding: 0 15px 0 6px; border-bottom: 1px solid #d9dcda; color: #17191c; font-size: 20px; font-weight: 600; }
.people li:nth-child(4n + 1) { height: 75px; }
.ph-tabs { display: grid; grid-template-columns: repeat(5, 1fr); padding: 18px 10px 0; border-top: 1px solid #e9ebeb; background: #fff; color: #7b8391; }
.ph-tabs a { display: flex; flex-direction: column; align-items: center; min-width: 0; padding: 0 4px; }
.ph-ico { display: flex; align-items: center; height: 32px; }
.ph-label { max-width: 100%; overflow: hidden; text-overflow: ellipsis; white-space: nowrap; font-size: 13px; line-height: 26px; font-weight: 600; color: #5c6470; }
.ph-tabs .on, .ph-tabs .on .ph-label { color: var(--brand); }
.ph-home { display: flex; justify-content: center; height: 49px; padding-top: 32px; background: #fff; }
.ph-home span { width: 190px; height: 7px; border-radius: 4px; background: #000; }
.devices { display: flex; align-items: center; justify-content: flex-end; gap: 39px; height: 40px; margin: 19px 29px 0 0; }
.dev-on { color: #3b3b3b; }
.dev-off { color: #9b9b9b; }

/* settings of the chosen screen */
.inspector { position: relative; flex: none; width: 722px; border-left: 2px solid #e6e6e6; border-right: 2px solid #e6e6e6; }
.group { display: flex; flex-direction: column; gap: 16px; padding: 20px 30px 40px 40px; border-bottom: 2px solid #efefef; }
.tiles-group { padding-bottom: 24px; }
.items { border: 0; padding-bottom: 8px; }
.first { padding-top: 26px; }
.panel-title { padding-left: 7px; font-size: 24px; margin-bottom: 12px; }
.segments { display: grid; grid-template-columns: 1fr 1fr; gap: 4px; height: 64px; padding: 4px; border-radius: 14px; background: #efefef; font-size: 26px; }
.segments button { justify-content: center; border-radius: 12px; color: #636363; }
.segments .on { background: #fff; color: var(--text); font-weight: 600; box-shadow: 0 1px 3px rgba(0, 0, 0, .15), 0 8px 18px rgba(0, 0, 0, .07); }
.group-head { display: flex; align-items: center; gap: 10px; height: 48px; }
.first .group-head { margin: 4px 0 12px; }
.group-head .chev { margin-left: auto; }
.row { display: flex; align-items: center; gap: 8px; }
.row label { flex: none; width: 219px; color: var(--ink); font-size: 26px; }
.items .row:nth-child(2) { margin-top: 12px; }
.field { flex: 1; min-width: 0; display: flex; align-items: center; height: 64px; padding: 0 27px 0 20px; border-radius: 14px; background: #efefef; font-weight: 600; }
.field select { padding-left: 16px; }
.src { margin-top: 6px; }
.plain { padding-left: 26px; }
.icon-pick { flex: none; width: 120px; gap: 22px; padding: 0 0 0 24px; }
.type { width: 42px; text-align: center; color: #636363; font-size: 26px; font-weight: 500; }
.tiles { display: grid; grid-template-columns: repeat(4, 1fr); gap: 8px; margin-top: -4px; }
.tile { flex-direction: column; height: 144px; padding-top: 26px; border-radius: 14px; color: #636363; --soft: #bfbfbf; }
.tile-ico { display: flex; align-items: center; height: 42px; margin-bottom: 16px; color: var(--ink); }
.tile.on { background: #eaf0ff; color: #2d3bed; font-weight: 500; --soft: #8790ff; }
.tile.on .tile-ico { color: #2d3bed; }
.info { width: 27px; height: 27px; border-radius: 50%; background: #bfbfbf; color: #fff; font-size: 20px; line-height: 27px; font-weight: 700; text-align: center; }
.help { position: absolute; right: 24px; bottom: 26px; justify-content: center; width: 76px; height: 76px; border-radius: 50%; background: var(--ink); color: #fff; font-size: 44px; font-weight: 500; box-shadow: 0 8px 24px rgba(0, 0, 0, .18); }

.dock { display: flex; justify-content: center; height: 40px; padding-top: 14px; border-bottom: 1px solid #c9cacc; }
.dock span { width: 630px; height: 11px; border-radius: 6px; background: #000; }
</style>
